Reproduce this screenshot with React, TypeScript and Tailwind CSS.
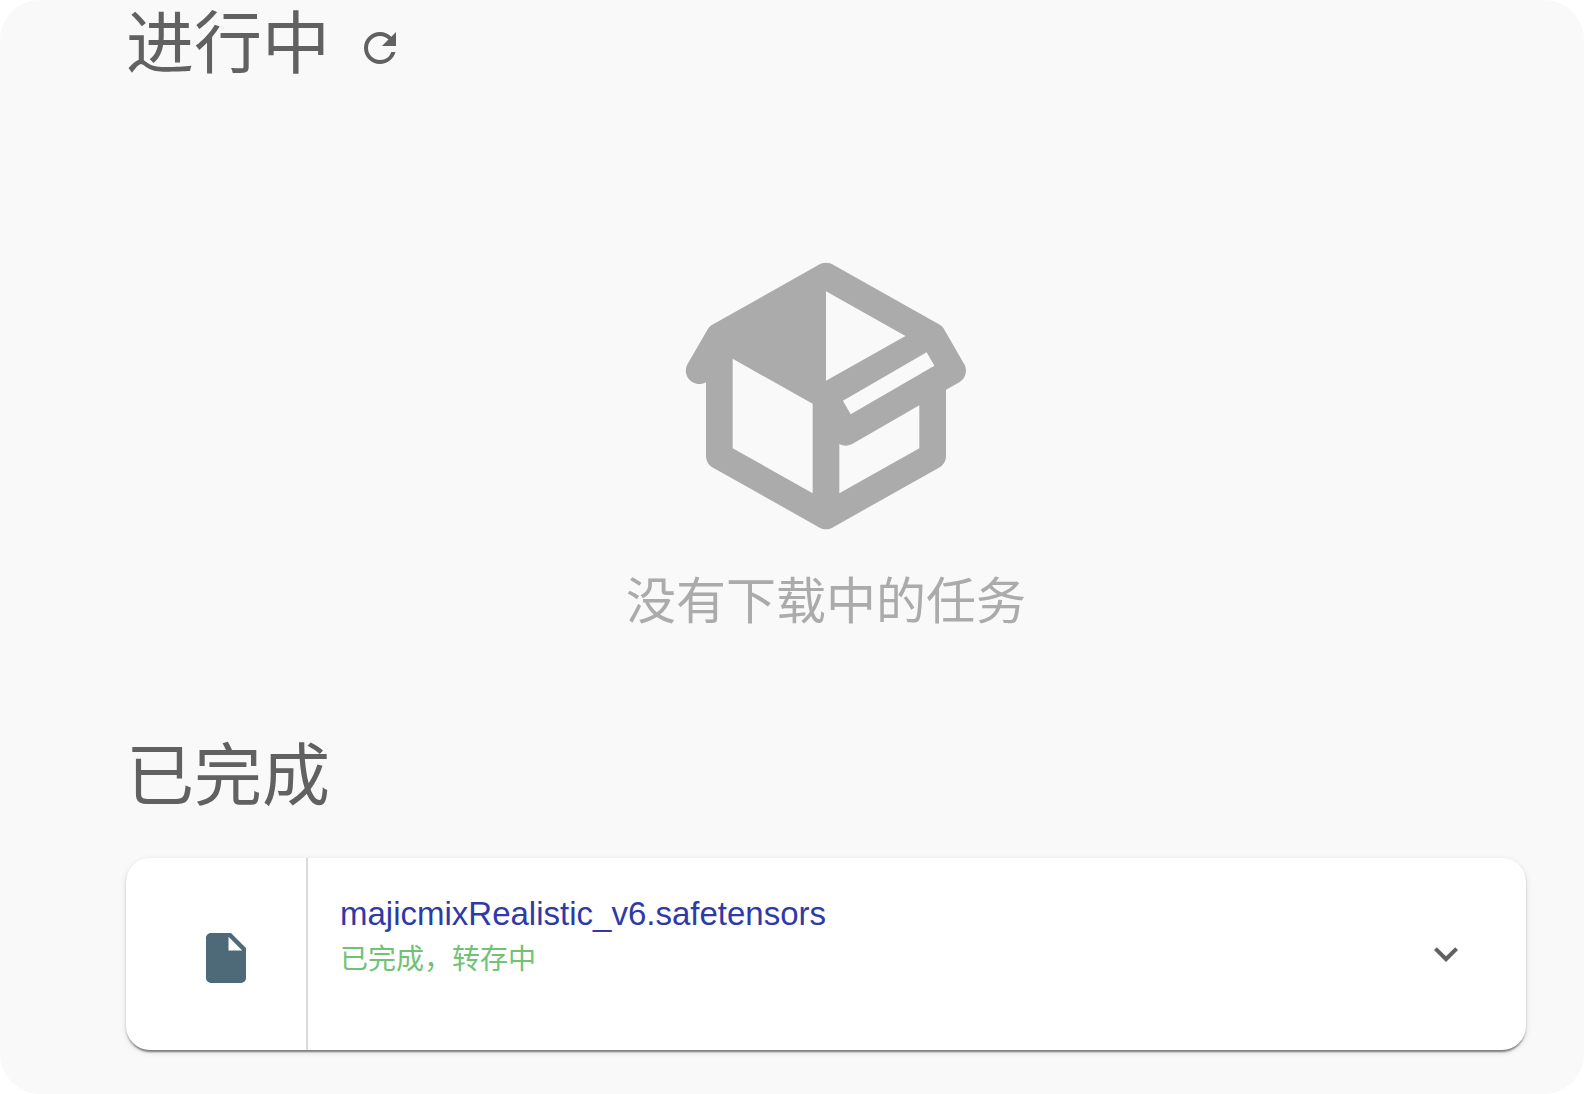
import { MdExpandMore, MdRefresh } from 'react-icons/md';

interface DownloadTask {
  name: string;
  status: string;
}

const finishedTasks: DownloadTask[] = [
  { name: 'majicmixRealistic_v6.safetensors', status: '已完成，转存中' },
];

function PackageIcon() {
  return (
    <svg viewBox="0 0 24 24" className="w-80 h-80 fill-current" aria-hidden="true">
      <path d="M2,10.96C1.5,10.68 1.35,10.07 1.63,9.59L3.13,7C3.24,6.8 3.41,6.66 3.6,6.58L11.43,2.18C11.59,2.06 11.79,2 12,2C12.21,2 12.41,2.06 12.57,2.18L20.47,6.62C20.66,6.72 20.82,6.88 20.91,7.08L22.36,9.6C22.64,10.08 22.47,10.69 22,10.96L21,11.54V16.5C21,16.88 20.79,17.21 20.47,17.38L12.57,21.82C12.41,21.94 12.21,22 12,22C11.79,22 11.59,21.94 11.43,21.82L3.53,17.38C3.21,17.21 3,16.88 3,16.5V10.96C2.7,11.13 2.32,11.14 2,10.96M12,4.15V4.15L12,10.85V10.85L17.96,7.5L12,4.15M5,15.91L11,19.29V12.58L5,9.21V15.91M19,15.91V12.69L14,15.59C13.67,15.77 13.3,15.76 13,15.6V19.29L19,15.91M13.85,13.36L20.13,9.73L19.55,8.72L13.27,12.35L13.85,13.36Z" />
    </svg>
  );
}

function FileIcon() {
  return (
    <svg viewBox="0 0 24 24" className="w-15 h-15 fill-[#4e6a78]" aria-hidden="true">
      <path d="M13,9V3.5L18.5,9M6,2C4.89,2 4,2.89 4,4V20A2,2 0 0,0 6,22H18A2,2 0 0,0 20,20V8L14,2H6Z" />
    </svg>
  );
}

function EmptyState() {
  return (
    <div className="flex flex-col items-center pt-37 text-[#ababab]">
      <PackageIcon />
      <p className="mt-[14px] text-[50px] leading-16">没有下载中的任务</p>
    </div>
  );
}

function TaskCard({ name, status }: DownloadTask) {
  return (
    <article className="flex min-h-48 rounded-3xl bg-white shadow-[0_4px_2px_-2px_rgba(0,0,0,0.32),0_2px_2px_0_rgba(0,0,0,0.2),0_2px_6px_0_rgba(0,0,0,0.12)]">
      <div className="flex w-[182px] shrink-0 items-center justify-center border-r-2 border-[#dadada] pl-5 pt-2">
        <FileIcon />
      </div>
      <div className="min-w-0 flex-1 px-8 pt-8">
        <p className="truncate text-[33px] leading-12 text-[#2f3aa5]">{name}</p>
        <p className="text-[28px] leading-11 text-[#70c274]">{status}</p>
      </div>
      <div className="flex items-center pr-8">
        <button type="button" aria-label="展开" className="p-6 text-[#616161]">
          <MdExpandMore className="w-12 h-12" />
        </button>
      </div>
    </article>
  );
}

export default function App() {
  return (
    <main className="min-h-screen rounded-[40px] bg-[#f9f9f9] pl-[126px] pr-[58px] font-['Liberation_Sans','Noto_Sans_CJK_SC',sans-serif]">
      <section>
        <div className="flex items-start text-[#616161]">
          <h1 className="text-[68px] leading-22">进行中</h1>
          <button type="button" aria-label="刷新" className="ml-[10px] mt-2 p-4">
            <MdRefresh className="w-12 h-12" />
          </button>
        </div>
        <EmptyState />
      </section>

      <section className="mt-25">
        <h2 className="text-[68px] leading-21 text-[#616161]">已完成</h2>
        <div className="mt-10">
          {finishedTasks.map((task) => (
            <TaskCard key={task.name} {...task} />
          ))}
        </div>
      </section>
    </main>
  );
}
